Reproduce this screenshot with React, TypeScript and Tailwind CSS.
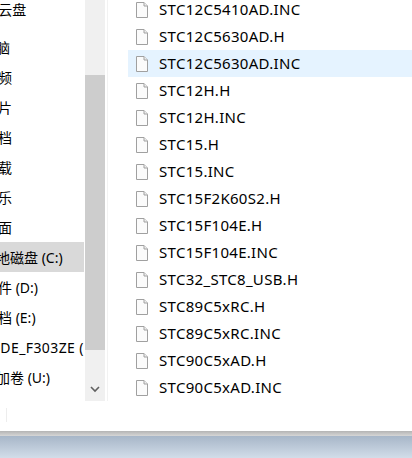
const navItems = [
  { label: 'WPS云盘', indent: 'ml-[-31px]', gap: true },
  { label: '此电脑', indent: 'ml-[-32px]' },
  { label: '视频', indent: 'ml-[-16px]' },
  { label: '图片', indent: 'ml-[-16px]' },
  { label: '文档', indent: 'ml-[-16px]' },
  { label: '下载', indent: 'ml-[-16px]' },
  { label: '音乐', indent: 'ml-[-16px]' },
  { label: '桌面', indent: 'ml-[-16px]' },
  { label: '本地磁盘 (C:)', indent: 'ml-[-18px]', selected: true },
  { label: '软件 (D:)', indent: 'ml-[-16px]' },
  { label: '文档 (E:)', indent: 'ml-[-16px]' },
  { label: 'NODE_F303ZE (F:)', indent: 'ml-[-22px]', narrow: true },
  { label: '新加卷 (U:)', indent: 'ml-[-18px]' },
];

const files = [
  'STC12C5410AD.INC',
  'STC12C5630AD.H',
  'STC12C5630AD.INC',
  'STC12H.H',
  'STC12H.INC',
  'STC15.H',
  'STC15.INC',
  'STC15F2K60S2.H',
  'STC15F104E.H',
  'STC15F104E.INC',
  'STC32_STC8_USB.H',
  'STC89C5xRC.H',
  'STC89C5xRC.INC',
  'STC90C5xAD.H',
  'STC90C5xAD.INC',
];

function FileIcon() {
  return (
    <svg width="12" height="16" viewBox="0 0 12 16" className="shrink-0">
      <path d="M0.5 0.5H8L11.5 4V15.5H0.5Z" fill="#fbfbfb" stroke="#a0a0a0" />
      <path d="M8 0.5V4H11.5" fill="#f0f0f0" stroke="#a0a0a0" />
    </svg>
  );
}

export default function App() {
  return (
    <div className="flex h-[458px] w-[412px] flex-col overflow-hidden bg-white font-['Noto_Sans','Noto_Sans_CJK_SC',sans-serif] text-[15px] text-black">
      <div className="flex h-[401px] overflow-hidden">
        {/* navigation pane, scrolled so only the tail of each label shows */}
        <nav className="w-[85px] shrink-0 overflow-hidden text-[14px]">
          <div className="-mt-[6px]">
            {navItems.map((item) => (
              <div key={item.label} className={item.gap ? 'mb-[8px]' : ''}>
                <div
                  className={`flex h-[30px] w-[84px] items-center overflow-hidden whitespace-nowrap ${
                    item.selected ? 'bg-[#d9d9d9]' : ''
                  }`}
                >
                  <span className={`${item.indent} ${item.narrow ? 'tracking-[0.4px]' : ''}`}>{item.label}</span>
                </div>
              </div>
            ))}
          </div>
        </nav>

        <div className="flex w-[20px] shrink-0 flex-col bg-[#f0f0f0]">
          <div className="h-[75px]" />
          <div className="h-[275px] bg-[#cdcdcd]" />
          <div className="flex flex-1 items-end justify-center pb-[8px]">
            <svg width="10" height="7" viewBox="0 0 10 7">
              <polyline points="1,1 5,5 9,1" fill="none" stroke="#606060" strokeWidth="1.6" />
            </svg>
          </div>
        </div>

        <div className="w-[2px] shrink-0" />
        <div className="w-px shrink-0 bg-[#f2f2f2]" />

        <div className="flex-1 overflow-hidden pl-[20px]">
          <div className="-mt-[4px]">
            {files.map((name, i) => (
              <div
                key={name}
                className={`flex h-[27px] items-center gap-[11px] whitespace-nowrap pl-[8px] tracking-[0.3px] ${
                  i === 2 ? 'bg-[#e5f3ff]' : ''
                }`}
              >
                <FileIcon />
                <span>{name}</span>
              </div>
            ))}
          </div>
        </div>
      </div>

      <div className="h-[30px] shrink-0 pl-[6px] pt-[7px]">
        <div className="h-[14px] w-px bg-[#ededed]" />
      </div>
      <div className="h-[5px] shrink-0 bg-gradient-to-b from-[#b4b4b4] to-[#d6d6d6]" />
      <div className="flex-1 bg-gradient-to-b from-[#a7b6c8] to-[#d2dde9]" />
    </div>
  );
}
